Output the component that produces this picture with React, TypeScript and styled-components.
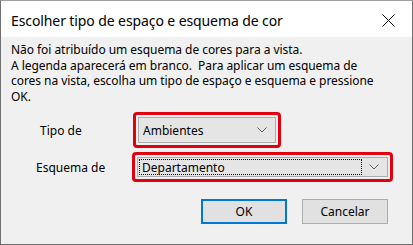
import React from 'react'
import styled, { createGlobalStyle } from 'styled-components'

const GlobalStyle = createGlobalStyle`
  html, body {
    margin: 0;
    padding: 0;
    width: 413px;
    height: 245px;
    overflow: hidden;
    background: #f0f0f0;
  }
`

const Window = styled.div`
  box-sizing: border-box;
  width: 413px;
  height: 245px;
  border: 1px solid #707070;
  border-top-color: #a0a0a0;
  background: #f0f0f0;
  display: flex;
  flex-direction: column;
  font-family: 'Noto Sans', 'Liberation Sans', sans-serif;
  color: #000;
`

const TitleBar = styled.div`
  height: 36px;
  flex: none;
  background: #fff;
  display: flex;
  align-items: center;
  justify-content: space-between;
  padding: 3px 0 0 10px;
  box-sizing: border-box;
`

const Title = styled.div`
  font-size: 14px;
  letter-spacing: -0.1px;
`

const CloseButton = styled.div`
  width: 46px;
  height: 30px;
  display: flex;
  align-items: center;
  justify-content: center;
  margin-right: 1px;
`

const Body = styled.div`
  flex: 1;
  display: flex;
  flex-direction: column;
  padding: 5px 10px 0 10px;
  font-size: 12px;
`

const Message = styled.div`
  line-height: 15.5px;
  letter-spacing: -0.05px;
  white-space: nowrap;
`

const Form = styled.div`
  display: flex;
  flex-direction: column;
  gap: 4px;
  margin-top: 8px;
`

const Row = styled.div`
  display: flex;
  align-items: center;
`

const Label = styled.div<{ $indent: number; $width: number }>`
  padding-left: ${(p) => p.$indent}px;
  width: ${(p) => p.$width}px;
  flex: none;
  box-sizing: border-box;
`

const Highlight = styled.div`
  border: 3px solid #e0000f;
  border-radius: 4px;
  padding: 2px;
  display: flex;
`

const Combo = styled.div<{ $width: number; $height: number }>`
  box-sizing: border-box;
  width: ${(p) => p.$width}px;
  height: ${(p) => p.$height}px;
  background: #e5e5e5;
  border: 1px solid #adadad;
  display: flex;
  align-items: center;
  padding: 1px;
`

const ComboText = styled.div<{ $focused?: boolean }>`
  flex: 1;
  align-self: stretch;
  display: flex;
  align-items: center;
  padding-left: 2px;
  box-sizing: border-box;
  border: 1px dotted ${(p) => (p.$focused ? '#000' : 'transparent')};
`

const Arrow = styled.div`
  width: 24px;
  flex: none;
  display: flex;
  align-items: center;
  justify-content: center;
`

const Buttons = styled.div`
  display: flex;
  justify-content: flex-end;
  gap: 15px;
  margin-top: auto;
  margin-bottom: 20px;
  margin-right: 14px;
`

const Button = styled.div<{ $primary?: boolean }>`
  box-sizing: border-box;
  width: 86px;
  height: 25px;
  background: #e1e1e1;
  border: ${(p) => (p.$primary ? '2px solid #0078d7' : '1px solid #adadad')};
  display: flex;
  align-items: center;
  justify-content: center;
`

const Chevron = () => (
  <svg width="10" height="6" viewBox="0 0 10 6">
    <path d="M0.5 0.5 L5 5 L9.5 0.5" fill="none" stroke="#606060" strokeWidth="1" />
  </svg>
)

const App: React.FC = () => {
  return (
    <>
      <GlobalStyle />
      <Window>
        <TitleBar>
          <Title>Escolher tipo de espaço e esquema de cor</Title>
          <CloseButton>
            <svg width="13" height="13" viewBox="0 0 13 13">
              <path d="M0.5 0.5 L12.5 12.5 M12.5 0.5 L0.5 12.5" stroke="#000" strokeWidth="1" />
            </svg>
          </CloseButton>
        </TitleBar>
        <Body>
          <Message>
            Não foi atribuído um esquema de cores para a vista.
            <br />
            A legenda aparecerá em branco.&nbsp; Para aplicar um esquema de
            <br />
            cores na vista, escolha um tipo de espaço e esquema e pressione
            <br />
            OK.
          </Message>
          <Form>
            <Row>
              <Label $indent={29} $width={122}>Tipo de</Label>
              <Highlight>
                <Combo $width={138} $height={26}>
                  <ComboText>Ambientes</ComboText>
                  <Arrow>
                    <Chevron />
                  </Arrow>
                </Combo>
              </Highlight>
            </Row>
            <Row>
              <Label $indent={25} $width={121}>Esquema de</Label>
              <Highlight>
                <Combo $width={251} $height={20}>
                  <ComboText $focused>Departamento</ComboText>
                  <Arrow>
                    <Chevron />
                  </Arrow>
                </Combo>
              </Highlight>
            </Row>
          </Form>
          <Buttons>
            <Button $primary>OK</Button>
            <Button>Cancelar</Button>
          </Buttons>
        </Body>
      </Window>
    </>
  )
}

export default App
